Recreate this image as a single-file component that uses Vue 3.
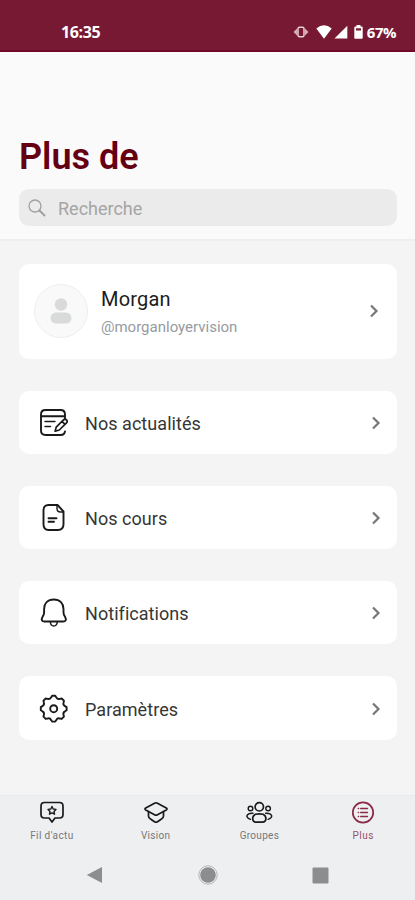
<template>
  <div class="screen">
    <header class="status-bar">
      <span class="time">16:35</span>
      <div class="status-icons">
        <svg class="vibrate" width="16" height="12" viewBox="0 0 16 12">
          <path d="M4 2.5 0.5 6 4 9.500zM12 2.500 15.500 6 12 9.500z" fill="#d5aebb" />
          <rect x="5" y="1.200" width="6" height="9.600" rx="1.500" fill="#781934" stroke="#e9d0cf" stroke-width="1.500" />
        </svg>
        <svg class="wifi" width="16" height="14" viewBox="0 0 16 14">
          <path d="M.3 3.400Q8-2.700 15.700 3.400L8 13.700z" fill="#fff" />
        </svg>
        <svg class="signal" width="14" height="14" viewBox="0 0 14 14">
          <path d="M13.300.7v12.800H.5z" fill="#fff" />
        </svg>
        <svg class="battery" width="9" height="14" viewBox="0 0 9 14">
          <path d="M2.500 0h4v1.500h1.300q.9 0 .9.900v10.500q0 .8-.8.800H1.100q-.8 0-.8-.8V2.400q0-.9.900-.9h1.300z" fill="#fff" />
          <path d="M2 3.300h5v2.200H2z" fill="#781934" />
        </svg>
        <span class="percent">67%</span>
      </div>
    </header>

    <section class="page-header">
      <h1>Plus de</h1>
      <div class="search">
        <svg width="18" height="18" viewBox="0 0 18 18" fill="none" stroke="#a0a0a0" stroke-linecap="round">
          <circle cx="7" cy="7" r="6" stroke-width="1.300" />
          <path d="m11.500 11.500 5 5" stroke-width="1.900" />
        </svg>
        <span>Recherche</span>
      </div>
    </section>

    <main class="content">
      <div class="card profile">
        <div class="avatar">
          <svg width="22" height="26" viewBox="0 0 22 26" fill="#d9dada">
            <circle cx="11" cy="6.500" r="6.200" />
            <rect x="0.500" y="14.500" width="21" height="11" rx="5.500" />
          </svg>
        </div>
        <div class="profile-text">
          <p class="name">Morgan</p>
          <p class="handle">@morganloyervision</p>
        </div>
        <svg class="chevron" width="10" height="14" viewBox="0 0 10 14">
          <path d="m2 1.500 5.500 5.500L2 12.500" />
        </svg>
      </div>

      <div v-for="item in items" :key="item.icon" class="card row">
        <svg class="row-icon" width="30" height="30" viewBox="0 0 30 30">
          <template v-if="item.icon === 'news'">
            <path d="M2 8.300h24V6.500Q26 2 21.500 2h-15Q2 2 2 6.500v16Q2 27 6.500 27h15.300q3.500 0 4.200-3.500M2 8.300h24v2" />
            <path d="M6 13.500h10M6 18.500h5.500" stroke-width="1.400" />
            <path d="m17.200 19.200 7.300-7.300q1.500-1.300 3 0 1.400 1.500 0 3L20.300 22l-4.200 1.200zM23 13.400l3 3" stroke-width="1.700" />
          </template>
          <template v-else-if="item.icon === 'course'">
            <path d="M9.500 2h9l6 6.500v12.800q0 5.700-5.700 5.700H9.500q-5 0-5-5.700V7.700Q4.500 2 9.500 2z" />
            <path d="M18 2v3.500q0 3.500 3.500 3.500h3" stroke-width="1.400" />
            <path d="M9.500 15.200h8M9.500 18.800h5.500" />
          </template>
          <template v-else-if="item.icon === 'bell'">
            <path d="M14.800 1.500c-6.200 0-9.700 4-9.700 9.500v3.500c0 2-.6 3-1.500 4.300C1.800 22 3 23.500 5.500 23.500h18.600c2.500 0 3.700-1.500 1.900-4.700-.9-1.300-1.500-2.300-1.500-4.300V11c0-5.500-3.500-9.500-9.700-9.500z" />
            <path d="M11.300 24q.5 4 3.500 4t3.500-4" stroke-width="1.500" />
          </template>
          <template v-else>
            <path :d="gearPath" />
            <circle cx="14.700" cy="14.700" r="3.500" />
          </template>
        </svg>
        <span class="row-label">{{ item.label }}</span>
        <svg class="chevron" width="10" height="14" viewBox="0 0 10 14">
          <path d="m2 1.500 5.500 5.500L2 12.500" />
        </svg>
      </div>
    </main>

    <footer class="bottom">
      <nav class="tabs">
        <div v-for="tab in tabs" :key="tab.icon" class="tab" :class="{ active: tab.icon === 'more' }">
          <svg width="28" height="24" viewBox="0 0 28 24">
            <template v-if="tab.icon === 'feed'">
              <path d="M6.500 1.500h15q3.500 0 3.500 3.500v8.500q0 3.500-3.500 3.500H17l-3 4-3-4H6.500Q3 17 3 13.500V5q0-3.500 3.500-3.500z" />
              <path d="m14 5.500 1.200 2.500 2.800.4-2 2 .5 2.800-2.500-1.400-2.500 1.400.5-2.800-2-2 2.800-.4z" stroke-width="1.400" />
            </template>
            <template v-else-if="tab.icon === 'cap'">
              <path d="M13 2.100q1-.6 2 0l9.300 5q1.500.9 0 1.800l-9.300 5q-1 .6-2 0L3.700 8.900q-1.500-.9 0-1.800z" />
              <path d="M6.500 10.700V15q0 2 2 3l4 2.700q1.500.8 3 0l4-2.700q2-1 2-3v-4.300" />
            </template>
            <template v-else-if="tab.icon === 'group'">
              <circle cx="14.300" cy="5.800" r="4.200" />
              <path d="M10.500 13.300q3.800-1 7.600 0 2.800 1.400 2.800 4.300 0 3.600-3.500 3.600h-6.200q-3.500 0-3.500-3.600 0-2.900 2.800-4.300z" />
              <g stroke-width="1.400">
                <circle cx="5.500" cy="7.500" r="2.300" />
                <circle cx="23.100" cy="7.500" r="2.300" />
                <path d="M8 12.300q-5-.3-6.100 2.500-.2 2.300 3.600 3.500M20.600 12.300q5-.3 6.100 2.500.2 2.300-3.600 3.500" />
              </g>
            </template>
            <template v-else>
              <circle cx="14" cy="11.500" r="10.200" />
              <path d="M11.700 7.500H18.500M11.700 11.500H18.500M11.700 15.500H18.500M9.300 7.500h.3M9.300 11.500h.3M9.300 15.500h.3" stroke-width="1.400" />
            </template>
          </svg>
          <span :class="'label-' + tab.icon">{{ tab.label }}</span>
        </div>
      </nav>
      <div class="system-nav">
        <svg width="17" height="18" viewBox="0 0 17 18"><path d="M.8 9 16 1v16z" /></svg>
        <svg width="20" height="20" viewBox="0 0 20 20">
          <circle cx="10" cy="10" r="9.200" class="ring" />
          <circle cx="10" cy="10" r="7.800" />
        </svg>
        <svg width="17" height="17" viewBox="0 0 17 17"><rect x=".5" y=".5" width="16" height="16" rx="1" /></svg>
      </div>
    </footer>
  </div>
</template>

<script setup>
const items = [
  { icon: 'news', label: 'Nos actualités' },
  { icon: 'course', label: 'Nos cours' },
  { icon: 'bell', label: 'Notifications' },
  { icon: 'gear', label: 'Paramètres' },
];

const tabs = [
  { icon: 'feed', label: "Fil d'actu" },
  { icon: 'cap', label: 'Vision' },
  { icon: 'group', label: 'Groupes' },
  { icon: 'more', label: 'Plus' },
];

// Eight teeth: flat tips on the outer ring, curved notches between them
const polar = (radius, degrees) => {
  const angle = (degrees * Math.PI) / 180;
  return `${(14.700 + radius * Math.cos(angle)).toFixed(2)} ${(14.700 + radius * Math.sin(angle)).toFixed(2)}`;
};
const gearTeeth = Array.from({ length: 8 }, (_, i) => {
  const center = i * 45;
  return `${polar(13, center - 7)}L${polar(13, center + 7)}L${polar(11.600, center + 13)}Q${polar(9.800, center + 22.500)} ${polar(11.600, center + 32)}`;
});
const gearPath = `M${gearTeeth.join('L')}Z`;
</script>

<style>
body {
  background: #f4f4f4;
}
</style>

<style scoped>
.screen {
  display: flex;
  flex-direction: column;
  width: 415px;
  height: 900px;
  background: #f4f4f4;
  font-family: Roboto, sans-serif;
  overflow: hidden;
}

svg {
  display: block;
  flex: none;
}

.status-bar {
  display: flex;
  justify-content: space-between;
  box-sizing: border-box;
  height: 52px;
  padding: 22px 19px 0 61px;
  background: #781934;
  border-bottom: 2px solid #700a2a;
  color: #fff;
  font-family: "Open Sans", sans-serif;
  font-size: 16px;
  font-weight: 700;
  line-height: 20px;
}

.time {
  letter-spacing: -0.4px;
}

.status-icons {
  display: flex;
  align-items: center;
  height: 20px;
}

.vibrate {
  margin-right: 7px;
}

.wifi {
  margin-right: 2px;
}

.signal {
  margin-right: 6px;
}

.battery {
  margin-right: 4px;
}

.percent {
  font-size: 15px;
  letter-spacing: -0.5px;
}

.page-header {
  box-sizing: border-box;
  height: 189px;
  padding: 84px 18px 0 19px;
  background: #fafafa;
  border-bottom: 2px solid #eeeeee;
}

h1 {
  margin: 0 0 11px;
  color: #650013;
  font-size: 36px;
  font-weight: 600;
  line-height: 42px;
}

.search {
  display: flex;
  align-items: center;
  gap: 12px;
  height: 37px;
  padding-left: 9px;
  border-radius: 10px;
  background: #ebebeb;
  color: #a5a5a5;
  font-size: 18px;
}

.search span {
  padding-top: 1px;
}

.content {
  display: flex;
  flex-direction: column;
  flex: 1;
  gap: 32px;
  padding: 22.600px 18px 0 19px;
}

.card {
  display: flex;
  align-items: center;
  box-sizing: border-box;
  border-radius: 10px;
  background: #fff;
}

.profile {
  height: 95px;
  padding: 0 18px 0 15px;
}

.avatar {
  display: flex;
  align-items: center;
  justify-content: center;
  box-sizing: border-box;
  width: 54px;
  height: 54px;
  border: 1px solid #eeeeee;
  border-radius: 50%;
  background: #f9f9f9;
}

.profile-text {
  flex: 1;
  margin-left: 13px;
  padding-top: 1px;
}

.profile-text p {
  margin: 0;
}

.name {
  color: #1c1c1c;
  font-size: 20px;
  letter-spacing: 0.2px;
  line-height: 26px;
}

.profile-text .handle {
  margin-top: 5px;
  color: #969ba1;
  font-size: 15px;
  line-height: 20px;
}

.row {
  height: 63.300px;
  padding: 1px 16px 0 20px;
}

.row-icon,
.tab svg {
  fill: none;
  stroke: #1a1a1a;
  stroke-width: 1.900;
  stroke-linecap: round;
  stroke-linejoin: round;
}

.row-label {
  flex: 1;
  margin-left: 16px;
  padding-top: 1px;
  color: #363636;
  font-size: 18px;
  letter-spacing: 0.05px;
}

.chevron {
  fill: none;
  stroke: #777;
  stroke-width: 2.200;
}

.bottom {
  box-sizing: border-box;
  height: 105px;
  border-top: 1px solid #e9eaec;
  background: #eeeff1;
}

.tabs {
  display: grid;
  grid-template-columns: repeat(4, 1fr);
  padding-top: 5px;
}

.tab {
  display: flex;
  flex-direction: column;
  align-items: center;
  color: #777;
  font-size: 10px;
  letter-spacing: 0.3px;
  line-height: 14px;
}

.tab span {
  margin-top: 4px;
}

.tab .label-feed {
  letter-spacing: 0.4px;
}

.tab .label-more {
  letter-spacing: 0.5px;
}

.tab svg {
  stroke-width: 1.700;
}

.tab.active {
  color: #985269;
}

.tab.active svg {
  stroke: #8b2947;
}

.system-nav {
  display: flex;
  align-items: center;
  justify-content: space-between;
  height: 20px;
  margin-top: 22px;
  padding: 0 86px;
  fill: #8c8e8e;
}

.ring {
  fill: none;
  stroke: #b3b5b5;
  stroke-width: 1;
}
</style>
